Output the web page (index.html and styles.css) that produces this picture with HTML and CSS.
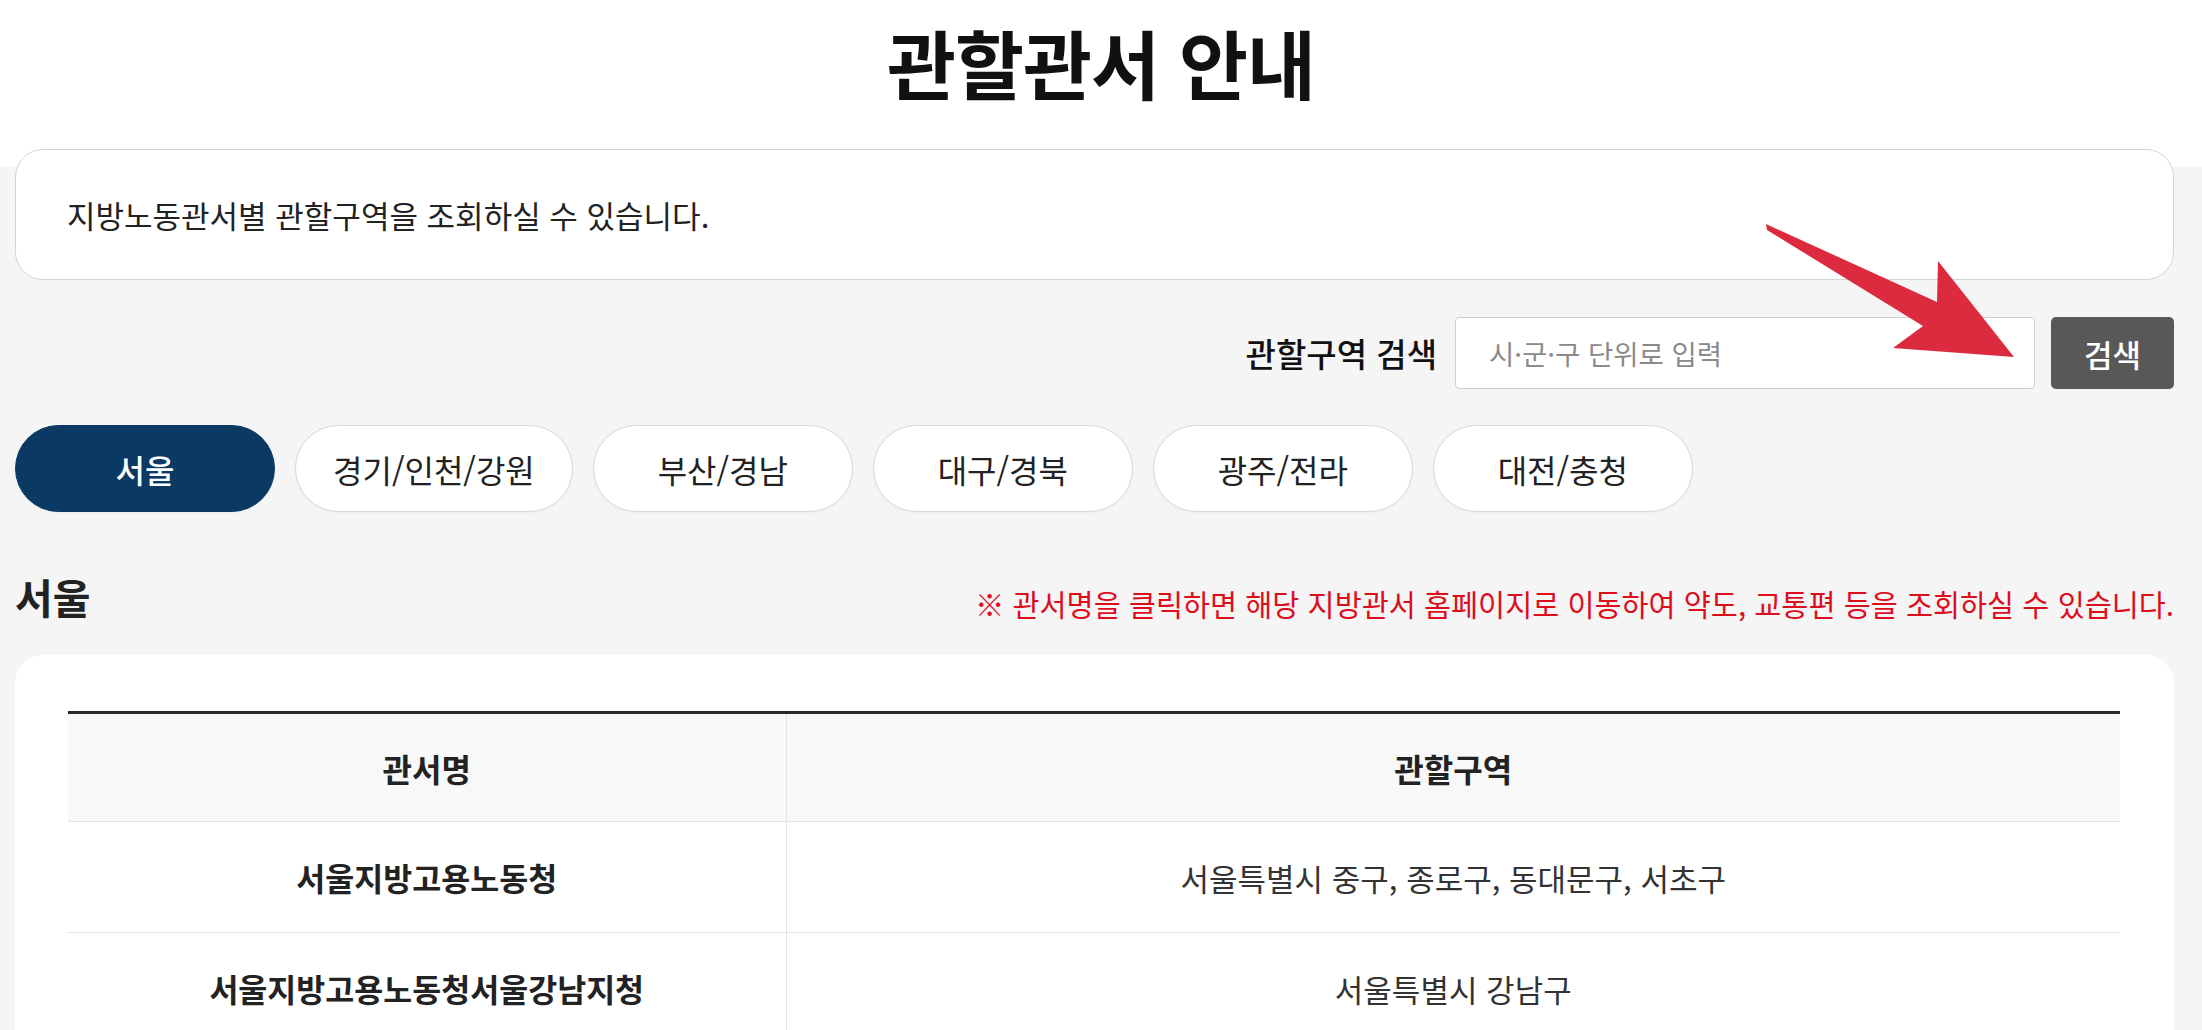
FILE: index.html
```html
<!DOCTYPE html>
<html lang="ko">
<head>
<meta charset="utf-8">
<title>관할관서 안내</title>
<link rel="stylesheet" href="styles.css">
</head>
<body>
<header class="page-head">
  <h1 class="page-title">관할관서 안내</h1>
</header>
<main class="content">
  <div class="intro">지방노동관서별 관할구역을 조회하실 수 있습니다.</div>
  <form class="search">
    <label class="search-label" for="q">관할구역 검색</label>
    <input class="search-input" id="q" type="text" placeholder="시·군·구 단위로 입력">
    <button class="search-btn" type="button">검색</button>
  </form>
  <nav class="tabs">
    <a class="tab active">서울</a>
    <a class="tab">경기/인천/강원</a>
    <a class="tab">부산/경남</a>
    <a class="tab">대구/경북</a>
    <a class="tab">광주/전라</a>
    <a class="tab">대전/충청</a>
  </nav>
  <div class="section-head">
    <h2 class="section-title">서울</h2>
    <p class="notice">※ 관서명을 클릭하면 해당 지방관서 홈페이지로 이동하여 약도, 교통편 등을 조회하실 수 있습니다.</p>
  </div>
  <div class="card">
    <table class="office-table">
      <colgroup><col class="col-name"><col class="col-area"></colgroup>
      <thead>
        <tr><th>관서명</th><th>관할구역</th></tr>
      </thead>
      <tbody>
        <tr><td class="name">서울지방고용노동청</td><td>서울특별시 중구, 종로구, 동대문구, 서초구</td></tr>
        <tr><td class="name">서울지방고용노동청서울강남지청</td><td>서울특별시 강남구</td></tr>
      </tbody>
    </table>
  </div>
</main>
<svg class="annot-arrow" width="2202" height="1030" viewBox="0 0 2202 1030" aria-hidden="true">
  <polygon points="1766,224 1937,302 1938,261 2014,357 1893,348 1923,326 1767,230" fill="#dc2b3e"/>
</svg>
</body>
</html>
```
FILE: styles.css
```css
* { box-sizing: border-box; }
html, body { margin: 0; padding: 0; }
body {
  font-family: "Noto Sans CJK KR", "Noto Sans", sans-serif;
  color: #222;
  background: #f5f5f5;
  width: 2202px;
  height: 1030px;
  overflow: hidden;
  position: relative;
}
.page-head {
  background: #fff;
  height: 167px;
  padding-top: 22px;
}
.page-title {
  margin: 0;
  text-align: center;
  font-size: 75px;
  line-height: 80px;
  font-weight: 700;
  color: #111;
  letter-spacing: -1px;
}
.content {
  padding: 0 28px 0 15px;
}
.intro {
  margin-top: -18px;
  height: 131px;
  background: #fff;
  border: 1px solid #d4d4d4;
  border-radius: 28px;
  padding-left: 51px;
  display: flex;
  align-items: center;
  font-size: 31px;
  color: #222;
}
.search {
  margin: 37px 0 0;
  display: flex;
  justify-content: flex-end;
  align-items: center;
  height: 72px;
}
.search-label {
  font-size: 33px;
  font-weight: 500;
  color: #111;
  margin-right: 18px;
}
.search-input {
  width: 580px;
  height: 72px;
  border: 1px solid #cfcfcf;
  border-radius: 4px;
  background: #fff;
  padding: 0 0 0 33px;
  font-family: inherit;
  font-size: 27.5px;
  color: #333;
  outline: none;
}
.search-input::placeholder { color: #8a8a8a; }
.search-btn {
  margin-left: 16px;
  width: 123px;
  height: 72px;
  border: 0;
  border-radius: 5px;
  background: #585858;
  color: #fff;
  font-family: inherit;
  font-size: 31px;
  font-weight: 500;
}
.tabs {
  margin-top: 36px;
  display: flex;
  gap: 20px;
}
.tab {
  min-width: 260px;
  height: 87px;
  padding: 0 37px;
  border-radius: 44px;
  background: #fff;
  border: 1px solid #d8d8d8;
  display: flex;
  align-items: center;
  justify-content: center;
  font-size: 32px;
  color: #222;
  box-shadow: 0 1px 2px rgba(0,0,0,0.04);
}
.tab.active {
  background: #0a3964;
  border-color: #0a3964;
  color: #fff;
  font-weight: 500;
}
.section-head {
  margin-top: 48px;
  height: 95px;
  display: flex;
  justify-content: space-between;
  align-items: flex-start;
}
.section-title {
  margin: 0;
  font-size: 41px;
  font-weight: 700;
  line-height: 72px;
  color: #222;
}
.notice {
  margin: 10px 0 0;
  font-size: 29.4px;
  line-height: 66px;
  color: #dd0d1c;
}
.card {
  background: #fff;
  border-radius: 28px;
  padding: 56px 54px 0 53px;
  height: 400px;
}
.office-table {
  width: 100%;
  border-collapse: collapse;
  table-layout: fixed;
  border-top: 3px solid #2a2a2a;
}
.col-name { width: 718px; }
.office-table th {
  background: #f8f8f8;
  height: 109px;
  font-size: 32px;
  font-weight: 700;
  color: #222;
  border-bottom: 1px solid #e3e3e3;
}
.office-table th + th,
.office-table td + td { border-left: 1px solid #e3e3e3; }
.office-table td {
  height: 111px;
  text-align: center;
  font-size: 31px;
  color: #333;
  border-bottom: 1px solid #e3e3e3;
}
.office-table td.name {
  font-size: 31.5px;
  font-weight: 700;
  color: #222;
}
.annot-arrow {
  position: absolute;
  left: 0;
  top: 0;
  pointer-events: none;
}
```
